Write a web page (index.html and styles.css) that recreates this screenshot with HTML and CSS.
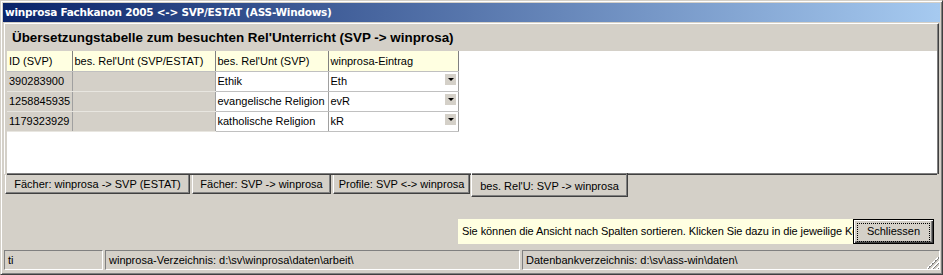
FILE: index.html
```html
<!DOCTYPE html>
<html lang="de">
<head>
    <meta charset="UTF-8">
    <title>winprosa Fachkanon 2005 &lt;-&gt; SVP/ESTAT (ASS-Windows)</title>
    <link rel="stylesheet" href="styles.css">
</head>
<body>
    <div class="window">
        <div class="titlebar">winprosa Fachkanon 2005 &lt;-&gt; SVP/ESTAT (ASS-Windows)</div>

        <div class="pages">
            <div class="page">
                <h1 class="page-title">Übersetzungstabelle zum besuchten Rel'Unterricht (SVP -&gt; winprosa)</h1>
                <div class="grid">
                    <table>
                        <tr class="head">
                            <th class="c-id">ID (SVP)</th>
                            <th class="c-estat">bes. Rel'Unt (SVP/ESTAT)</th>
                            <th class="c-svp">bes. Rel'Unt (SVP)</th>
                            <th class="c-entry">winprosa-Eintrag</th>
                        </tr>
                        <tr>
                            <td class="fixed">390283900</td>
                            <td class="fixed"></td>
                            <td>Ethik</td>
                            <td class="combo">Eth<span class="drop"></span></td>
                        </tr>
                        <tr>
                            <td class="fixed">1258845935</td>
                            <td class="fixed"></td>
                            <td>evangelische Religion</td>
                            <td class="combo">evR<span class="drop"></span></td>
                        </tr>
                        <tr>
                            <td class="fixed">1179323929</td>
                            <td class="fixed"></td>
                            <td>katholische Religion</td>
                            <td class="combo">kR<span class="drop"></span></td>
                        </tr>
                    </table>
                </div>
            </div>
            <div class="tab-strip">
                <div class="tab tab-1">Fächer: winprosa -&gt; SVP (ESTAT)</div>
                <div class="tab tab-2">Fächer: SVP -&gt; winprosa</div>
                <div class="tab tab-3">Profile: SVP &lt;-&gt; winprosa</div>
                <div class="tab tab-4 active">bes. Rel'U: SVP -&gt; winprosa</div>
            </div>
        </div>

        <div class="actions">
            <div class="hint">Sie können die Ansicht nach Spalten sortieren. Klicken Sie dazu in die jeweilige Kopfzeile.</div>
            <button class="close-btn"><span>Schliessen</span></button>
        </div>

        <div class="statusbar">
            <div class="panel p-user">ti</div>
            <div class="panel p-dir">winprosa-Verzeichnis: d:\sv\winprosa\daten\arbeit\</div>
            <div class="panel p-db">Datenbankverzeichnis: d:\sv\ass-win\daten\<span class="grip"></span></div>
        </div>
    </div>
</body>
</html>
```

FILE: styles.css
```css
body {
    margin: 0;
    font-family: "Liberation Sans", Arial, sans-serif;
    font-size: 11px;
    color: #000;
    background: #d4d0c8;
}
.window {
    width: 943px;
    height: 275px;
    box-sizing: border-box;
    border: 1px solid;
    border-color: #d4d0c8 #404040 #404040 #d4d0c8;
    box-shadow: inset 1px 1px 0 #fff, inset -1px -1px 0 #808080;
    padding: 2px;
    display: flex;
    flex-direction: column;
    overflow: hidden;
}
.titlebar {
    height: 19px;
    line-height: 19px;
    padding-left: 2px;
    color: #fff;
    font-family: "DejaVu Sans", Verdana, sans-serif;
    font-weight: bold;
    font-size: 10.5px;
    letter-spacing: -0.25px;
    background: linear-gradient(to right, #0a246a, #a6caf0);
    white-space: nowrap;
}

/* page control, tabs at the bottom */
.pages {
    margin: 1px 1px 0 1px;
}
.page {
    border-top: 1px solid #fff;
    border-left: 1px solid #fff;
    border-right: 1px solid #404040;
    box-shadow: inset -1px 0 0 #808080;
    padding: 0 1px 0 2px;
}
.page-title {
    margin: 0;
    height: 27px;
    line-height: 20px;
    padding: 4px 0 0 5px;
    box-sizing: border-box;
    font-size: 13.4px;
    font-weight: bold;
    white-space: nowrap;
}
.grid {
    height: 122px;
    background: #fff;
    border-bottom: 1px solid #808080;
    box-shadow: 0 1px 0 #404040;
}
table {
    border-collapse: collapse;
    table-layout: fixed;
}
th, td {
    padding: 0 0 0 2px;
    text-align: left;
    font-weight: normal;
    white-space: nowrap;
    overflow: hidden;
    border-right: 1px solid #a0a0a0;
    border-bottom: 1px solid #c0c0c0;
    height: 20px;
    box-sizing: border-box;
}
.head th {
    background: #ffffe1;
    border-right-color: #808080;
}
.c-id { width: 65px; }
.c-estat { width: 143px; }
.c-svp { width: 113px; }
.c-entry { width: 130px; }
td.fixed {
    background: #d4d0c8;
    border-bottom-color: #e8e6e0;
}
td.combo {
    position: relative;
}
.drop {
    position: absolute;
    right: 2px;
    top: 2px;
    width: 11px;
    height: 11px;
    background: #d4d0c8;
}
.drop::after {
    content: "";
    position: absolute;
    left: 3px;
    top: 4px;
    border-left: 3px solid transparent;
    border-right: 3px solid transparent;
    border-top: 3px solid #000;
}

.tab-strip {
    display: flex;
    gap: 2px;
    padding-left: 1px;
    height: 26px;
    align-items: flex-start;
    margin-top: 1px;
}
.tab {
    height: 19px;
    line-height: 18px;
    box-sizing: border-box;
    text-align: center;
    border-left: 1px solid #fff;
    border-right: 1px solid #404040;
    border-bottom: 1px solid #404040;
    box-shadow: inset -1px -1px 0 #808080;
    white-space: nowrap;
}
.tab-1 { width: 185px; }
.tab-2 { width: 139px; }
.tab-3 { width: 137px; }
.tab-4 { width: 157px; }
.tab.active {
    height: 24px;
    margin-top: -2px;
    margin-left: -1px;
    line-height: 26px;
}

.actions {
    display: flex;
    justify-content: flex-end;
    height: 25px;
    margin-top: 18px;
    padding-right: 6px;
}
.hint {
    width: 391px;
    padding-left: 4px;
    line-height: 25px;
    letter-spacing: -0.08px;
    background: #ffffe1;
    white-space: nowrap;
    overflow: hidden;
}
.close-btn {
    width: 81px;
    height: 25px;
    padding: 3px;
    font-family: inherit;
    font-size: 11px;
    background: #d4d0c8;
    border: 1px solid #000;
    box-shadow: inset 1px 1px 0 #fff, inset -1px -1px 0 #404040, inset -2px -2px 0 #808080;
}
.close-btn span {
    display: block;
    height: 17px;
    line-height: 15px;
    border: 1px dotted #000;
}

.statusbar {
    display: flex;
    gap: 2px;
    height: 20px;
    margin-top: 6px;
    padding-left: 1px;
}
.panel {
    box-sizing: border-box;
    border: 1px solid;
    border-color: #808080 #fff #fff #808080;
    line-height: 18px;
    padding-left: 3px;
    white-space: nowrap;
    overflow: hidden;
}
.p-user { width: 99px; }
.p-dir { width: 415px; }
.p-db {
    flex: 1;
    position: relative;
}
.grip {
    position: absolute;
    right: 0;
    bottom: 0;
    width: 12px;
    height: 12px;
    background: linear-gradient(135deg,
        transparent 45%, #fff 45%, #fff 50%, #808080 50%, #808080 58%,
        transparent 58%, transparent 66%, #fff 66%, #fff 71%, #808080 71%, #808080 79%,
        transparent 79%, transparent 87%, #fff 87%, #fff 92%, #808080 92%);
}
```
